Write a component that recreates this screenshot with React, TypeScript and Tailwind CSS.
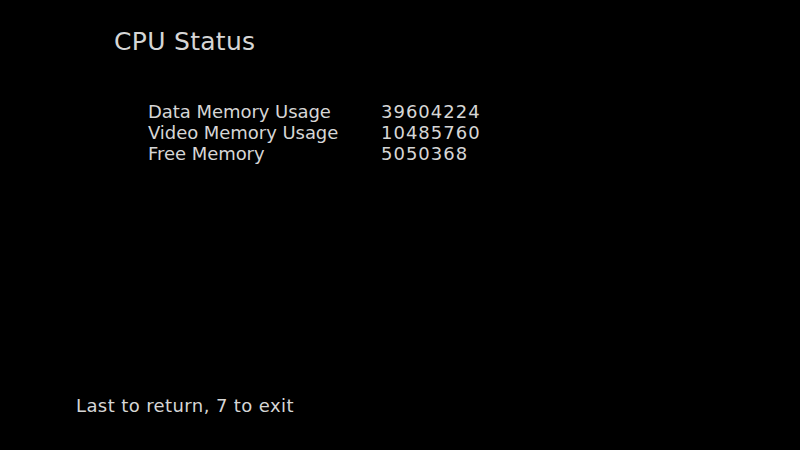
const rows = [
  { label: 'Data Memory Usage', value: '39604224' },
  { label: 'Video Memory Usage', value: '10485760' },
  { label: 'Free Memory', value: '5050368' },
];

export default function App() {
  return (
    <div
      className="w-[800px] h-[450px] bg-black text-[#d6d6d6] flex flex-col overflow-hidden"
      style={{ fontFamily: '"DejaVu Sans", Verdana, sans-serif' }}
    >
      <h1 className="pl-[114px] pt-[27px] text-[25px] leading-[30px] tracking-[0.3px]">CPU Status</h1>

      <div className="pl-[148px] pt-[44px] flex flex-col">
        {rows.map((r) => (
          <div key={r.label} className="flex text-[18px] leading-[21px]">
            <span className="w-[233px] tracking-[-0.05px]">{r.label}</span>
            <span className="tracking-[1px]">{r.value}</span>
          </div>
        ))}
      </div>

      <p className="mt-auto mb-[34px] pl-[76px] text-[18px] leading-[21px] tracking-[0.4px]">Last to return, 7 to exit</p>
    </div>
  );
}
